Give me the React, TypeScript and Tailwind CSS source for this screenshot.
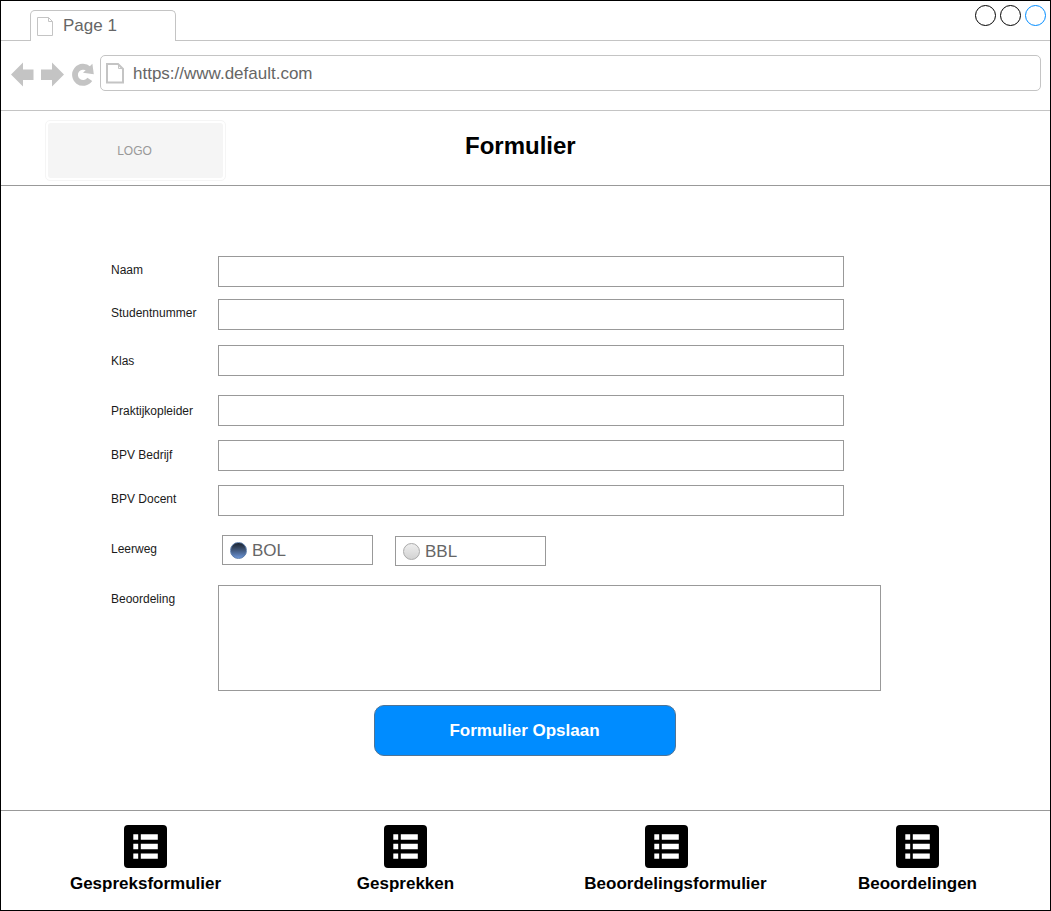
import React from 'react';

function PageIcon({ className, thin = false }: { className: string; thin?: boolean }) {
  return thin ? (
    <svg className={className} width="17" height="20" viewBox="0 0 17 20" fill="none" stroke="#c4c4c4">
      <path d="M.5.5H11.5L15.5 4.5V18.5H.5ZM11.5.5V4.5H15.5" />
    </svg>
  ) : (
    <svg className={className} width="18" height="21" viewBox="0 0 18 21" fill="none" stroke="#c4c4c4">
      <path d="M1 1H12L17 6V19.5H1Z" strokeWidth="2" />
      <path d="M12.5 1V5.5H17" />
    </svg>
  );
}

function BrowserChrome() {
  return (
    <>
      <div className="flex h-10 shrink-0 items-end">
        <div className="h-10 w-[29px] border-b border-[#c4c4c4]" />
        <div className="flex h-[31px] w-[146px] translate-y-0 items-start rounded-t-[5px] border-x border-t border-[#c4c4c4] pl-[6px]">
          <PageIcon thin className="mt-[6px]" />
          <span className="ml-[9px] mt-[5px] leading-5">Page 1</span>
        </div>
        <div className="flex h-10 flex-1 justify-end gap-1 border-b border-[#c4c4c4] pr-[4px] pt-1">
          <div className="size-[21px] rounded-full border border-black" />
          <div className="size-[21px] rounded-full border border-black" />
          <div className="size-[21px] rounded-full border border-[#008cff]" />
        </div>
      </div>
      <div className="flex h-[70px] shrink-0 items-start border-b border-[#c4c4c4] pl-[10px]">
        <svg className="mt-[19px]" width="85" height="30" viewBox="11 60 85 30" fill="#c4c4c4">
          <path d="M11 74.5L23 62.5V69.5H33.5V80H23V86.5Z" />
          <path d="M64 74.5L52 62.5V69.5H41V80H52V86.5Z" />
          <path d="M88.6 68.9A8.1 8.1 0 1 0 89.8 79.4" fill="none" stroke="#c4c4c4" strokeWidth="5.8" />
          <path d="M92.4 63.7L93.8 74.3L83 72.8Z" />
        </svg>
        <div className="ml-1 mt-[14px] flex h-9 w-[941px] items-start rounded-[5px] border border-[#c4c4c4] pl-[5px]">
          <PageIcon className="mt-[7px]" />
          <span className="ml-[9px] mt-2 leading-5">https://www.default.com</span>
        </div>
      </div>
    </>
  );
}

function Field({ label, gap, offset }: { label: string; gap: string; offset: string }) {
  return (
    <label className={`flex items-start ${gap}`}>
      <span className={`w-[107px] leading-4 ${offset}`}>{label}</span>
      <input className="h-[31px] w-[626px] border border-[#999] bg-white px-2 outline-none" />
    </label>
  );
}

const fields = [
  { label: 'Naam', gap: '', offset: 'mt-[6px]' },
  { label: 'Studentnummer', gap: 'mt-3', offset: 'mt-[6px]' },
  { label: 'Klas', gap: 'mt-[15px]', offset: 'mt-2' },
  { label: 'Praktijkopleider', gap: 'mt-[19px]', offset: 'mt-2' },
  { label: 'BPV Bedrijf', gap: 'mt-[14px]', offset: 'mt-[7px]' },
  { label: 'BPV Docent', gap: 'mt-[14px]', offset: 'mt-[6px]' },
];

function Radio({ label, selected, className }: { label: string; selected: boolean; className: string }) {
  return (
    <div className={`flex h-[30px] w-[151px] items-start border border-[#999] pl-[7px] text-[17px] text-[#666] ${className}`}>
      <span
        className={`mt-[6px] size-[17px] rounded-full ${
          selected
            ? 'border border-[#5b7cab] bg-linear-to-b from-[#1c2430] to-[#6b94d6]'
            : 'border border-[#aaa] bg-linear-to-b from-[#eee] to-[#d2d2d2]'
        }`}
      />
      <span className="ml-[5px] mt-[5px] leading-5">{label}</span>
    </div>
  );
}

function ListIcon({ className = '' }: { className?: string }) {
  return (
    <svg className={className} width="43" height="43" viewBox="0 0 43 43">
      <rect width="43" height="43" rx="4" />
      <path
        fill="#fff"
        d="M9.3 9.3h4.9v5.4H9.3zM16.8 9.3h17v5.4h-17zM9.3 18.8h4.9v5.4H9.3zM16.8 18.8h17v5.4h-17zM9.3 28.4h4.9v5.4H9.3zM16.8 28.4h17v5.4h-17z"
      />
    </svg>
  );
}

const links = [
  { label: 'Gespreksformulier', gap: 'ml-[49px]', icon: '' },
  { label: 'Gesprekken', gap: 'ml-[69px]', icon: '' },
  { label: 'Beoordelingsformulier', gap: 'ml-[79px]', icon: 'mr-[18px]' },
  { label: 'Beoordelingen', gap: 'ml-[51px]', icon: '' },
];

export default function App() {
  return (
    <div className="flex h-[911px] w-[1051px] flex-col border border-black bg-white font-['Liberation_Sans',Arial,sans-serif] text-[17px] text-[#666]">
      <BrowserChrome />
      <header className="flex h-[75px] shrink-0 items-start border-b border-[#999] pl-11 pt-[9px]">
        <div className="h-[61px] w-[181px] rounded-[5px] border border-[#f5f5f5] p-[2px]">
          <div className="flex h-full items-center justify-center rounded-[3px] bg-[#f5f5f5] pr-[2px] text-xs text-[#999]">
            LOGO
          </div>
        </div>
        <h1 className="ml-[239px] mt-3 text-2xl leading-7 font-bold text-black">Formulier</h1>
      </header>
      <main className="flex-1 pl-[110px] pt-[70px] text-xs text-[#1a1a1a]">
        {fields.map((f) => (
          <Field key={f.label} {...f} />
        ))}
        <div className="mt-[19px] flex items-start">
          <span className="mt-[6px] w-[111px] leading-4">Leerweg</span>
          <Radio label="BOL" selected className="" />
          <Radio label="BBL" selected={false} className="ml-[22px] mt-px" />
        </div>
        <label className="mt-[19px] flex items-start">
          <span className="mt-[6px] w-[107px] leading-4">Beoordeling</span>
          <textarea className="block h-[106px] w-[663px] resize-none border border-[#999] outline-none" />
        </label>
        <button className="ml-[263px] mt-[14px] flex h-[51px] w-[302px] items-center justify-center rounded-[10px] border border-[#4f7496] bg-[#008cff] pr-px pt-0.5 text-[17px] font-bold text-white">
          Formulier Opslaan
        </button>
      </main>
      <footer className="flex h-[100px] shrink-0 border-t border-[#999] pt-[14px] text-black">
        {links.map((l) => (
          <a key={l.label} className={`flex w-[191px] shrink-0 flex-col items-center ${l.gap}`}>
            <ListIcon className={l.icon} />
            <span className="mt-[6px] leading-5 font-bold">{l.label}</span>
          </a>
        ))}
      </footer>
    </div>
  );
}
